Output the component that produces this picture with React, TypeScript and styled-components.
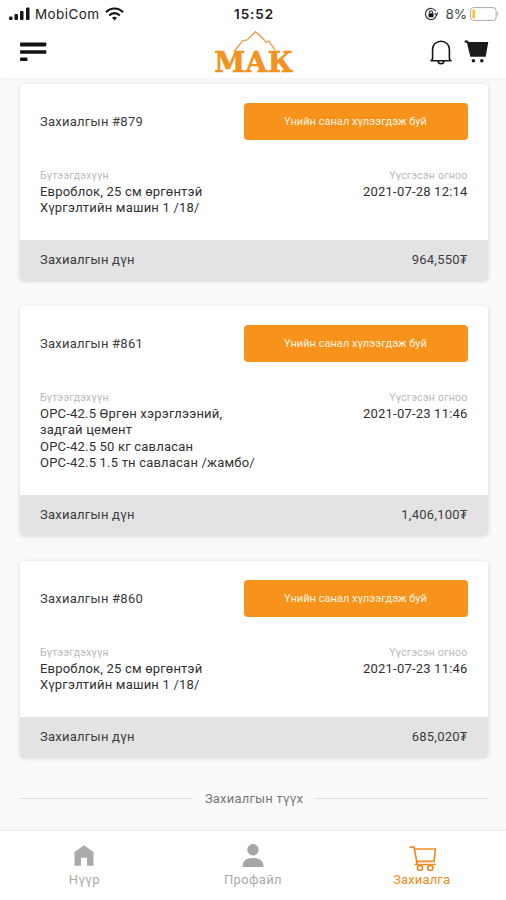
import React from 'react';
import styled, { createGlobalStyle } from 'styled-components';

const GlobalStyle = createGlobalStyle`
  * { box-sizing: border-box; }
  body { margin: 0; background: #fafafa; }
`;

const Screen = styled.div`
  width: 506px;
  height: 900px;
  display: flex;
  flex-direction: column;
  overflow: hidden;
  background: #fafafa;
  color: #3c3c3c;
  font-family: Roboto, 'Noto Sans', sans-serif;
`;

const Top = styled.header`
  flex: none;
  height: 78px;
  background: #fff;
  box-shadow: 0 1px 3px rgba(0, 0, 0, 0.04);
`;

const StatusBar = styled.div`
  display: grid;
  grid-template-columns: 1fr auto 1fr;
  align-items: center;
  height: 27px;
  padding: 0 7px 0 9px;
  font-family: Inter, 'Liberation Sans', sans-serif;
  color: #222;
`;

const StatusGroup = styled.div<{ $end?: boolean }>`
  display: flex;
  align-items: center;
  justify-content: ${(p) => (p.$end ? 'flex-end' : 'flex-start')};
`;

const Carrier = styled.span`
  margin: 0 6px 0 5px;
  font-size: 13.5px;
  letter-spacing: 0.4px;
`;

const Clock = styled.span`
  font-size: 13.5px;
  font-weight: 600;
  letter-spacing: 0.9px;
`;

const Percent = styled.span`
  margin: 0 3px 0 7px;
  font-size: 13.5px;
  color: #444;
`;

const NavBar = styled.div`
  display: grid;
  grid-template-columns: 1fr auto 1fr;
  height: 51px;
  padding: 0 17px 0 20px;
`;

const NavIcons = styled.div<{ $end?: boolean }>`
  display: flex;
  gap: 12px;
  padding-top: 12px;
  justify-content: ${(p) => (p.$end ? 'flex-end' : 'flex-start')};
`;

const List = styled.main`
  flex: 1;
  display: flex;
  flex-direction: column;
  gap: 25.5px;
  padding: 6px 18px 0 20px;
`;

const Card = styled.article`
  flex: none;
  border-radius: 4px;
  background: #fff;
  box-shadow: 0 1px 4px rgba(0, 0, 0, 0.16);
  overflow: hidden;
`;

const CardBody = styled.div`
  padding: 19.4px 20.5px 23px 20px;
`;

const CardHead = styled.div`
  display: flex;
  align-items: center;
  justify-content: space-between;
  height: 36.5px;
`;

const Title = styled.span`
  font-size: 13px;
  letter-spacing: 0.25px;
  white-space: nowrap;
`;

const Status = styled.button`
  width: 224px;
  height: 36.5px;
  padding: 0;
  border: 0;
  border-radius: 4px;
  background: #f7931a;
  color: #fff3e2;
  font: 11px Roboto, sans-serif;
  letter-spacing: 0.03px;
`;

const Details = styled.div`
  display: flex;
  justify-content: space-between;
  margin-top: 28px;
`;

const Column = styled.div<{ $end?: boolean }>`
  text-align: ${(p) => (p.$end ? 'right' : 'left')};
  white-space: nowrap;
`;

const Label = styled.div`
  height: 16px;
  font-size: 10.5px;
  line-height: 16px;
  letter-spacing: 0.22px;
  color: #b9b9b9;
`;

const Line = styled.div`
  height: 16.5px;
  font-size: 13px;
  line-height: 16.5px;
  letter-spacing: 0.2px;
  color: #303030;
`;

const Total = styled.footer`
  display: flex;
  align-items: baseline;
  justify-content: space-between;
  height: 40.6px;
  padding: 12.4px 20.5px 0 20px;
  background: #e3e3e3;
  font-size: 13px;
  line-height: 16px;
  letter-spacing: 0.25px;
`;

const Divider = styled.div`
  display: flex;
  align-items: center;
  gap: 12px;
  margin-top: 7px;
  font-size: 13px;
  line-height: 18px;
  letter-spacing: 0.2px;
  color: #777;
  &::before, &::after {
    content: '';
    flex: 1;
    height: 1px;
    background: #dedede;
  }
`;

const TabBar = styled.nav`
  flex: none;
  display: grid;
  grid-template-columns: repeat(3, 1fr);
  height: 69px;
  background: #fff;
  box-shadow: 0 -1px 4px rgba(0, 0, 0, 0.09);
`;

const Tab = styled.a<{ $active?: boolean }>`
  display: flex;
  flex-direction: column;
  align-items: center;
  padding-top: 12px;
  font-size: 13px;
  line-height: 18px;
  letter-spacing: ${(p) => (p.$active ? '0.15px' : '0.35px')};
  color: ${(p) => (p.$active ? '#ef8b22' : '#aaa')};
  svg { height: 28px; }
`;

const orders = [
  { id: 879, items: ['Евроблок, 25 см өргөнтэй', 'Хүргэлтийн машин 1 /18/'], date: '2021-07-28 12:14', total: '964,550₮' },
  { id: 861, items: ['ОРС-42.5 Өргөн хэрэглээний,', 'задгай цемент', 'ОРС-42.5 50 кг савласан', 'ОРС-42.5 1.5 тн савласан /жамбо/'], date: '2021-07-23 11:46', total: '1,406,100₮' },
  { id: 860, items: ['Евроблок, 25 см өргөнтэй', 'Хүргэлтийн машин 1 /18/'], date: '2021-07-23 11:46', total: '685,020₮' },
];

const Signal = () => (
  <svg width="21" height="14" viewBox="0 0 21 14" fill="#151515">
    <rect x="0" y="9.5" width="3.5" height="3.5" rx="1" />
    <rect x="5.5" y="7" width="3.5" height="6" rx="1" />
    <rect x="11" y="4" width="3.5" height="9" rx="1" />
    <rect x="17" y="0.5" width="3.5" height="12.5" rx="1" />
  </svg>
);

const Wifi = () => (
  <svg width="19" height="14" viewBox="0 0 19 14" fill="none" stroke="#151515" strokeWidth="2.1">
    <path d="M1 5.2C5.8.2 13.2.2 18 5.2M4.2 8.4c3-3.1 7.6-3.1 10.6 0" />
    <path d="M9.5 13.4 7 10.8c1.4-1.3 3.6-1.3 5 0z" fill="#151515" stroke="none" />
  </svg>
);

const RotationLock = () => (
  <svg width="14" height="14" viewBox="0 0 14 14" fill="none" stroke="#333" strokeWidth="1.2">
    <path d="M11.8 4.2A5.6 5.6 0 1 0 12.5 8" />
    <path d="m10.6 6.2 2 2 1.2-2.6" />
    <rect x="4.5" y="6.2" width="5" height="4" rx=".5" fill="#111" stroke="none" />
    <path d="M5.5 6.5V5.3a1.5 1.5 0 0 1 3 0v1.2" />
  </svg>
);

const Battery = () => (
  <svg width="29" height="14" viewBox="0 0 29 14" fill="none">
    <rect x=".6" y=".6" width="25.5" height="12.8" rx="3" stroke="#aaa" />
    <rect x="2.4" y="2.5" width="2.6" height="9" rx="1" fill="#fbc02d" />
    <path d="M27.3 4.8q2 2.2 0 4.4z" fill="#aaa" />
  </svg>
);

const Menu = () => (
  <svg width="27" height="23" viewBox="0 0 27 23" fill="#111">
    <rect y="3.4" width="26.3" height="4" rx="1" />
    <rect y="11.2" width="26.3" height="3.5" rx="1" />
    <rect y="18.6" width="7.5" height="3.4" rx="1" />
  </svg>
);

const LogoMark = styled.svg`
  margin-left: -1px;
`;

const Logo = () => (
  <LogoMark width="83" height="51" viewBox="0 0 83 51">
    <path d="M21 24.5l8.8-10.8 4.4-.7 8.3-8.3 6.7 6 4 4.6 2.6-1.3 6.3 9.2" fill="none" stroke="#ef9c3c" strokeWidth="1.3" />
    <text x="1.2" y="44.8" textLength="78.8" lengthAdjust="spacingAndGlyphs" fontFamily="'DejaVu Serif'" fontWeight="700" fontSize="27.8" fill="#f39220" stroke="#f39220" strokeWidth="0.7">МАК</text>
  </LogoMark>
);

const Bell = () => (
  <svg width="22" height="26" viewBox="0 0 22 26" fill="none" stroke="#181818" strokeWidth="1.6">
    <path d="M2.6 20V10.2a8.4 8 0 0 1 16.8 0V20M.4 21.8c1.6 0 2.2-1 2.2-3M21.6 21.8c-1.6 0-2.2-1-2.2-3M.4 21.8h21.2M8.2 22.3a2.8 2.5 0 0 0 5.6 0" />
  </svg>
);

const Cart = () => (
  <svg width="25" height="26" viewBox="0 0 25 26" fill="#1a1a1a">
    <path d="M.6 1.6h3.2l1.1 1.3h19.4l-2.6 14.9H6.4L3 4.2.6 3.2z" />
    <circle cx="9.4" cy="21.7" r="1.8" />
    <circle cx="17.8" cy="21.7" r="1.8" />
  </svg>
);

const Home = () => (
  <svg width="24" viewBox="0 0 24 28" fill="#aaa">
    <path d="M2.5 9 12 2.2 21.5 9v13.8H15v-8H9v8H2.5z" />
  </svg>
);

const Person = () => (
  <svg width="24" viewBox="0 0 24 28" fill="#a6a6a6">
    <circle cx="12" cy="6.8" r="5.7" />
    <path d="M1.5 24c0-6 3.5-9 10.5-9s10.5 3 10.5 9z" />
  </svg>
);

const CartLine = () => (
  <svg width="28" viewBox="0 0 28 28" fill="none" stroke="#ef8b22" strokeWidth="1.7">
    <path d="M1.5 4.2h4.6l3 16.6M7 6h20.5L26 18.4H8.9M6.5 21.5h21.3" />
    <circle cx="12" cy="25" r="2.6" />
    <circle cx="22.3" cy="25" r="2.6" />
  </svg>
);

export default function App() {
  return (
    <Screen>
      <GlobalStyle />
      <Top>
        <StatusBar>
          <StatusGroup><Signal /><Carrier>MobiCom</Carrier><Wifi /></StatusGroup>
          <Clock>15:52</Clock>
          <StatusGroup $end><RotationLock /><Percent>8%</Percent><Battery /></StatusGroup>
        </StatusBar>
        <NavBar>
          <NavIcons><Menu /></NavIcons>
          <Logo />
          <NavIcons $end><Bell /><Cart /></NavIcons>
        </NavBar>
      </Top>
      <List>
        {orders.map((o) => (
          <Card key={o.id}>
            <CardBody>
              <CardHead>
                <Title>Захиалгын #{o.id}</Title>
                <Status>Үнийн санал хүлээгдэж буй</Status>
              </CardHead>
              <Details>
                <Column>
                  <Label>Бүтээгдэхүүн</Label>
                  {o.items.map((item) => <Line key={item}>{item}</Line>)}
                </Column>
                <Column $end>
                  <Label>Үүсгэсэн огноо</Label>
                  <Line>{o.date}</Line>
                </Column>
              </Details>
            </CardBody>
            <Total><span>Захиалгын дүн</span><span>{o.total}</span></Total>
          </Card>
        ))}
        <Divider>Захиалгын түүх</Divider>
      </List>
      <TabBar>
        <Tab><Home />Нүүр</Tab>
        <Tab><Person />Профайл</Tab>
        <Tab $active><CartLine />Захиалга</Tab>
      </TabBar>
    </Screen>
  );
}
